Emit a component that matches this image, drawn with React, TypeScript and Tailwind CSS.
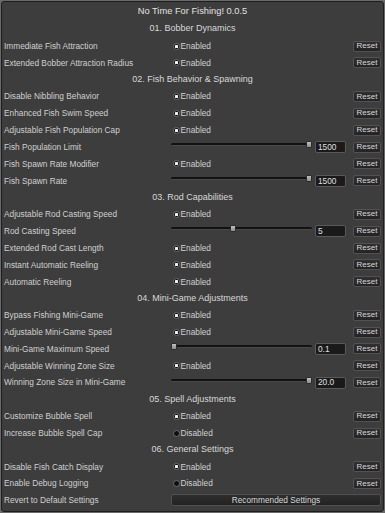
import React from "react";

type Row =
  | { kind: "toggle"; label: string; on: boolean }
  | { kind: "slider"; label: string; value: string; pct: number }
  | { kind: "button"; label: string; text: string };

interface Section {
  title: string;
  rows: Row[];
}

const sections: Section[] = [
  {
    title: "01. Bobber Dynamics",
    rows: [
      { kind: "toggle", label: "Immediate Fish Attraction", on: true },
      { kind: "toggle", label: "Extended Bobber Attraction Radius", on: true },
    ],
  },
  {
    title: "02. Fish Behavior & Spawning",
    rows: [
      { kind: "toggle", label: "Disable Nibbling Behavior", on: true },
      { kind: "toggle", label: "Enhanced Fish Swim Speed", on: true },
      { kind: "toggle", label: "Adjustable Fish Population Cap", on: true },
      { kind: "slider", label: "Fish Population Limit", value: "1500", pct: 100 },
      { kind: "toggle", label: "Fish Spawn Rate Modifier", on: true },
      { kind: "slider", label: "Fish Spawn Rate", value: "1500", pct: 100 },
    ],
  },
  {
    title: "03. Rod Capabilities",
    rows: [
      { kind: "toggle", label: "Adjustable Rod Casting Speed", on: true },
      { kind: "slider", label: "Rod Casting Speed", value: "5", pct: 44 },
      { kind: "toggle", label: "Extended Rod Cast Length", on: true },
      { kind: "toggle", label: "Instant Automatic Reeling", on: true },
      { kind: "toggle", label: "Automatic Reeling", on: true },
    ],
  },
  {
    title: "04. Mini-Game Adjustments",
    rows: [
      { kind: "toggle", label: "Bypass Fishing Mini-Game", on: true },
      { kind: "toggle", label: "Adjustable Mini-Game Speed", on: true },
      { kind: "slider", label: "Mini-Game Maximum Speed", value: "0.1", pct: 0 },
      { kind: "toggle", label: "Adjustable Winning Zone Size", on: true },
      { kind: "slider", label: "Winning Zone Size in Mini-Game", value: "20.0", pct: 100 },
    ],
  },
  {
    title: "05. Spell Adjustments",
    rows: [
      { kind: "toggle", label: "Customize Bubble Spell", on: true },
      { kind: "toggle", label: "Increase Bubble Spell Cap", on: false },
    ],
  },
  {
    title: "06. General Settings",
    rows: [
      { kind: "toggle", label: "Disable Fish Catch Display", on: true },
      { kind: "toggle", label: "Enable Debug Logging", on: false },
      { kind: "button", label: "Revert to Default Settings", text: "Recommended Settings" },
    ],
  },
];

const ResetButton = () => (
  <button className="ml-auto w-[28px] h-[11px] flex items-center justify-center rounded-[2px] border border-[#525252] bg-gradient-to-b from-[#303030] to-[#242424] text-[8px] leading-none text-[#d6d6d6]">
    Reset
  </button>
);

const SettingRow = ({ row }: { row: Row }) => (
  <div className="flex items-center h-[16.84px] text-[8.3px] text-[#d0d0d0] leading-none">
    <span className="w-[167px] shrink-0 whitespace-nowrap">{row.label}</span>

    {row.kind === "toggle" && (
      <>
        <span className="ml-[1.5px] w-[7px] h-[7px] shrink-0 rounded-full bg-[#0e0e0e] border border-[#6e6e6e] flex items-center justify-center">
          {row.on && <span className="w-[3px] h-[3px] bg-[#f2f2f2] rounded-[0.5px]" />}
        </span>
        <span className="ml-[1px]">{row.on ? "Enabled" : "Disabled"}</span>
        <ResetButton />
      </>
    )}

    {row.kind === "slider" && (
      <>
        <div className="relative w-[141px] h-[7px] mb-[5px] flex items-center">
          <div className="w-full h-[3px] rounded-full bg-[#121212] border-b border-[#4a4a4a]" />
          <div
            className="absolute top-0 w-[6px] h-[7px] rounded-[1.5px] bg-gradient-to-b from-[#c0c0c0] to-[#8c8c8c] border border-[#2a2a2a]"
            style={{ left: `calc(${row.pct}% * (141 - 6) / 141)` }}
          />
        </div>
        <div className="ml-[3px] w-[31px] h-[12px] flex items-center pl-[2px] rounded-[2px] border border-[#5a5a5a] bg-[#1a1a1a] text-[#e0e0e0]">
          {row.value}
        </div>
        <ResetButton />
      </>
    )}

    {row.kind === "button" && (
      <button className="flex-1 h-[12px] flex items-center justify-center rounded-[2px] border border-[#505050] bg-gradient-to-b from-[#2e2e2e] to-[#232323] text-[#d6d6d6]">
        {row.text}
      </button>
    )}
  </div>
);

export default function App() {
  return (
    <div
      className="w-[385px] h-[513px] bg-[#6a6a6a] p-[1px]"
      style={{ fontFamily: '"Liberation Sans", Arial, sans-serif' }}
    >
      <div className="h-full rounded-[3px] border border-[#1e1e1e] bg-[#3d3d3d] pt-[2px] pl-[2px] pr-[2px]">
        <div className="h-[16.84px] flex items-center justify-center text-[9.3px] text-[#e2e2e2]">
          No Time For Fishing! 0.0.5
        </div>
        {sections.map((s) => (
          <div key={s.title}>
            <div className="h-[16.84px] flex items-center justify-center text-[9px] text-[#d8d8d8]">
              {s.title}
            </div>
            {s.rows.map((r) => (
              <SettingRow key={r.label} row={r} />
            ))}
          </div>
        ))}
      </div>
    </div>
  );
}
